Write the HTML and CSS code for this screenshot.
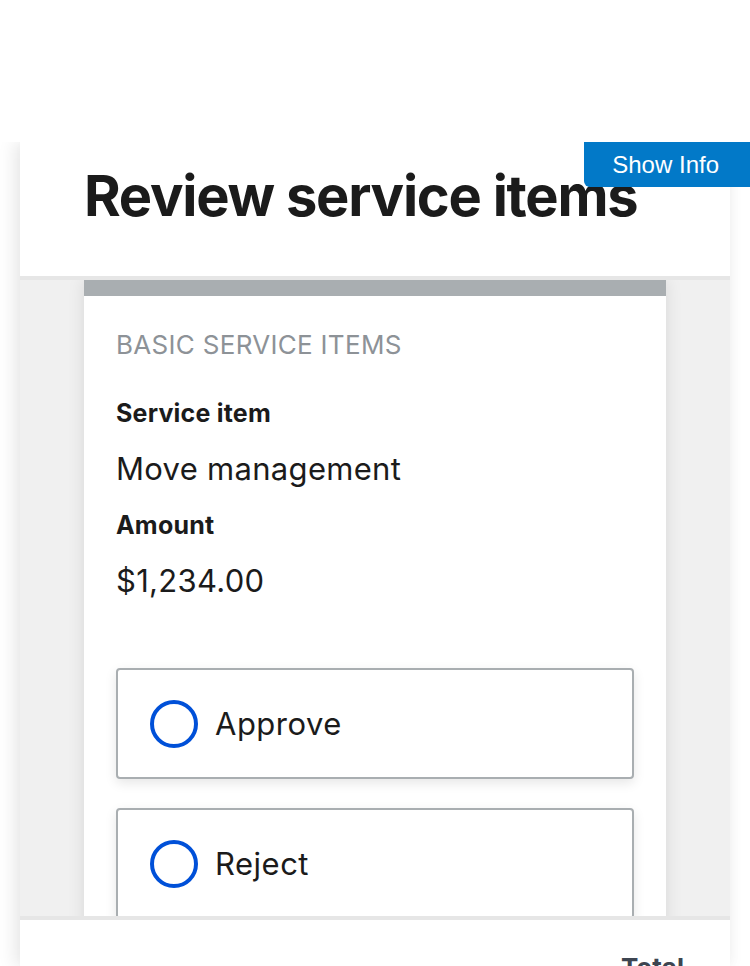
FILE: index.html
```html
<!DOCTYPE html>
<html lang="en">
<head>
<meta charset="utf-8">
<title>Review service items</title>
<link rel="stylesheet" href="styles.css">
</head>
<body>
<div class="top-gap"></div>
<div class="panel">
  <header class="panel-header">
    <h1 class="title">Review service items</h1>
  </header>
  <main class="panel-body">
    <section class="card">
      <h2 class="card-heading">BASIC SERVICE ITEMS</h2>
      <dl class="details">
        <dt class="label">Service item</dt>
        <dd class="value">Move management</dd>
        <dt class="label">Amount</dt>
        <dd class="value">$1,234.00</dd>
      </dl>
      <div class="options">
        <label class="tile"><span class="radio"></span><span class="tile-text">Approve</span></label>
        <label class="tile"><span class="radio"></span><span class="tile-text">Reject</span></label>
      </div>
    </section>
  </main>
  <footer class="panel-footer">
    <span class="total">Total</span>
  </footer>
</div>
<button class="show-info">Show Info</button>
</body>
</html>
```
FILE: styles.css
```css
html, body {
  margin: 0;
  padding: 0;
}
body {
  width: 750px;
  height: 966px;
  overflow: hidden;
  background: #ffffff;
  position: relative;
  font-family: "Inter", "Roboto", sans-serif;
  color: #1b1b1b;
}
.top-gap {
  height: 142px;
}
.panel {
  margin-left: 20px;
  width: 710px;
  height: 824px;
  overflow: hidden;
  background: #fff;
  box-shadow: -6px 0 16px rgba(0, 0, 0, 0.09), 4px 0 12px rgba(0, 0, 0, 0.03);
  clip-path: inset(0 -40px 0 -40px);
}
.panel-header {
  box-sizing: border-box;
  height: 138px;
  padding: 21px 64px 0;
  border-bottom: 4px solid #e6e6e6;
  background: #fff;
}
.title {
  margin: 0;
  font-size: 56px;
  line-height: 1.2;
  font-weight: 700;
  letter-spacing: -1.25px;
  color: #1b1b1b;
}
.panel-body {
  height: 636px;
  overflow: hidden;
  background: #f0f0f0;
}
.card {
  box-sizing: border-box;
  width: 582px;
  min-height: 760px;
  margin: 0 auto;
  background: #fff;
  border-top: 16px solid #a9aeb1;
  box-shadow: 0 0 16px rgba(0, 0, 0, 0.1);
  padding: 33px 32px 0;
}
.card-heading {
  margin: 0;
  font-size: 26px;
  line-height: 1.2;
  font-weight: 400;
  letter-spacing: 0.3px;
  color: #8d9297;
}
.details {
  margin: 38px 0 0;
  display: flex;
  flex-direction: column;
}
.label {
  font-size: 25px;
  line-height: 30px;
  font-weight: 700;
  letter-spacing: 0.2px;
  color: #1b1b1b;
}
.value {
  margin: 22px 0 0;
  font-size: 31px;
  line-height: 38px;
  font-weight: 400;
  letter-spacing: 0.3px;
  color: #1b1b1b;
}
.value + .label {
  margin-top: 22px;
}
.options {
  margin-top: 68px;
  display: flex;
  flex-direction: column;
  gap: 29px;
}
.tile {
  box-sizing: border-box;
  height: 111px;
  display: flex;
  align-items: center;
  gap: 17px;
  padding-left: 32px;
  background: #fff;
  border: 2px solid #a9aeb1;
  border-radius: 4px;
  box-shadow: 0 4px 12px rgba(0, 0, 0, 0.1);
}
.radio {
  box-sizing: border-box;
  width: 48px;
  height: 48px;
  border: 4px solid #0050d8;
  border-radius: 50%;
  flex: none;
}
.tile-text {
  font-size: 31px;
  line-height: 38px;
  letter-spacing: 0.5px;
  color: #1b1b1b;
}
.panel-footer {
  box-sizing: border-box;
  height: 120px;
  border-top: 4px solid #e6e6e6;
  background: #fff;
  padding: 32px 46px 0;
  text-align: right;
}
.total {
  font-size: 26px;
  line-height: 1.2;
  font-weight: 700;
  color: #3d4551;
}
.show-info {
  position: absolute;
  top: 142px;
  right: 0;
  height: 45px;
  margin: 0;
  padding: 0 31px 0 28px;
  border: 0;
  border-bottom-left-radius: 6px;
  background: #0279c8;
  color: #fff;
  font-family: "Liberation Sans", Arial, sans-serif;
  font-size: 24px;
  line-height: 45px;
}
```
